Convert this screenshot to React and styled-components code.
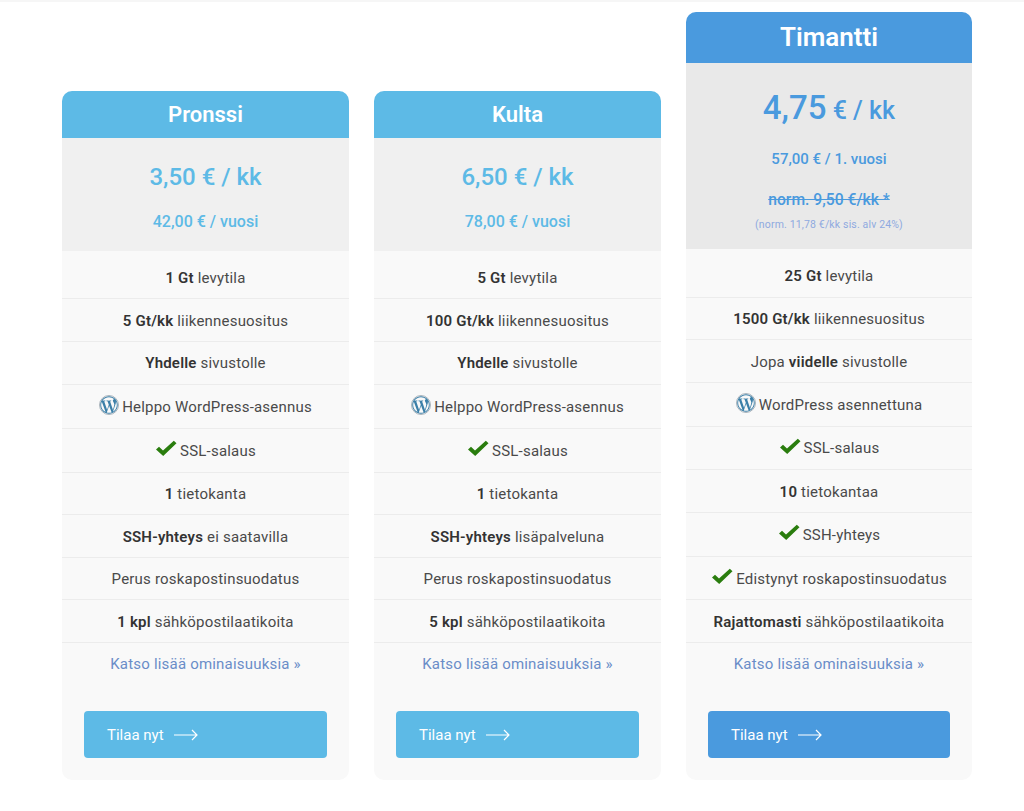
import React from 'react'
import styled, { createGlobalStyle } from 'styled-components'
import { FaWordpressSimple } from 'react-icons/fa'

const plans = [
  {
    name: 'Pronssi',
    color: '#5dbae6',
    price: '3,50 € / kk',
    yearly: '42,00 € / vuosi',
    rows: [
      [<b key="b">1 Gt</b>, ' levytila'],
      [<b key="b">5 Gt/kk</b>, ' liikennesuositus'],
      [<b key="b">Yhdelle</b>, ' sivustolle'],
      { icon: 'wp', text: 'Helppo WordPress-asennus' },
      { icon: 'check', text: 'SSL-salaus' },
      [<b key="b">1</b>, ' tietokanta'],
      [<b key="b">SSH-yhteys</b>, ' ei saatavilla'],
      ['Perus roskapostinsuodatus'],
      [<b key="b">1 kpl</b>, ' sähköpostilaatikoita'],
    ],
  },
  {
    name: 'Kulta',
    color: '#5dbae6',
    price: '6,50 € / kk',
    yearly: '78,00 € / vuosi',
    rows: [
      [<b key="b">5 Gt</b>, ' levytila'],
      [<b key="b">100 Gt/kk</b>, ' liikennesuositus'],
      [<b key="b">Yhdelle</b>, ' sivustolle'],
      { icon: 'wp', text: 'Helppo WordPress-asennus' },
      { icon: 'check', text: 'SSL-salaus' },
      [<b key="b">1</b>, ' tietokanta'],
      [<b key="b">SSH-yhteys</b>, ' lisäpalveluna'],
      ['Perus roskapostinsuodatus'],
      [<b key="b">5 kpl</b>, ' sähköpostilaatikoita'],
    ],
  },
  {
    name: 'Timantti',
    featured: true,
    color: '#4a9ade',
    rows: [
      [<b key="b">25 Gt</b>, ' levytila'],
      [<b key="b">1500 Gt/kk</b>, ' liikennesuositus'],
      ['Jopa ', <b key="b">viidelle</b>, ' sivustolle'],
      { icon: 'wp', text: 'WordPress asennettuna' },
      { icon: 'check', text: 'SSL-salaus' },
      [<b key="b">10</b>, ' tietokantaa'],
      { icon: 'check', text: 'SSH-yhteys' },
      { icon: 'check', text: 'Edistynyt roskapostinsuodatus' },
      [<b key="b">Rajattomasti</b>, ' sähköpostilaatikoita'],
    ],
  },
]

const GlobalStyle = createGlobalStyle`
  html, body { margin: 0; padding: 0; background: #fff; }
  body { font-family: Roboto, "Liberation Sans", sans-serif; color: #444; }
  * { box-sizing: border-box; }
`

const Page = styled.div`
  height: 811px;
  overflow: hidden;
  border-top: 2px solid #f6f6f6;
  padding: 10px 0 0 62px;
`
const Columns = styled.div`
  display: grid;
  grid-template-columns: 287px 287px 286px;
  column-gap: 25px;
  align-items: end;
  height: 768px;
`
const Card = styled.div`
  background: #f9f9f9;
  border-radius: 10px;
`
const Header = styled.h2`
  margin: 0;
  height: ${p => (p.$featured ? 51 : 47)}px;
  line-height: ${p => (p.$featured ? 51 : 47)}px;
  text-align: center;
  color: #fff;
  background: ${p => p.$color};
  border-radius: 10px 10px 0 0;
  font-size: ${p => (p.$featured ? 26 : 22)}px;
  font-weight: 600;
`
const PriceBox = styled.div`
  height: ${p => (p.$featured ? 186 : 113)}px;
  padding-top: ${p => (p.$featured ? 26 : 25)}px;
  background: ${p => (p.$featured ? '#e9e9e9' : '#f0f0f0')};
  color: ${p => p.$color};
  text-align: center;
`
const Price = styled.div`
  font-size: 24px;
  line-height: 28px;
  font-weight: 500;
`
const BigPrice = styled.div`
  line-height: 38px;
  font-size: 25px;
  font-weight: 500;
  span { font-size: 33px; }
`
const Yearly = styled.div`
  margin-top: ${p => (p.$featured ? 19 : 21)}px;
  font-size: ${p => (p.$featured ? 15 : 16)}px;
  line-height: 20px;
  font-weight: 500;
`
const Struck = styled.div`
  margin-top: 21px;
  font-size: 15.7px;
  line-height: 20px;
  font-weight: 500;
  text-decoration: line-through;
`
const Tax = styled.div`
  margin-top: 8px;
  font-size: 10.5px;
  line-height: 14px;
  letter-spacing: 0.15px;
  color: #8fa9e0;
`
const Rows = styled.div`
  padding-top: ${p => (p.$featured ? 6 : 5.8)}px;
`
const rowHeight = p => {
  if (!p.$tall) return 42.6
  return p.$featured ? 43.75 : 44
}
const Row = styled.div`
  height: ${rowHeight}px;
  display: flex;
  align-items: center;
  justify-content: center;
  gap: ${p => (p.$tall ? 3 : 0)}px;
  padding-top: 1px;
  border-bottom: 1px solid #ececec;
  font-size: 15px;
  letter-spacing: 0.2px;
  white-space: pre;
  color: #4a4a4a;
  b { font-weight: 600; color: #333; }
`
const WpBadge = styled.span`
  display: flex;
  align-items: center;
  justify-content: center;
  width: 20px;
  height: 20px;
  margin-top: -3px;
  border: 1px solid #aab4bc;
  border-radius: 50%;
  color: #3b7fa8;
  svg { width: 18px; height: 18px; }
`
const CheckSvg = styled.svg`
  width: 22px;
  height: 17px;
  margin-top: -4px;
`
const MoreLink = styled.a`
  display: block;
  height: 43px;
  line-height: 43px;
  text-align: center;
  font-size: 15px;
  letter-spacing: 0.2px;
  color: #6a8dc8;
`
const BtnWrap = styled.div`
  padding: 25px 22px 22px;
`
const Button = styled.a`
  display: flex;
  align-items: center;
  gap: 10px;
  height: 47px;
  padding-left: 23px;
  background: ${p => p.$color};
  border-radius: 4px;
  color: #fff;
  font-size: 15px;
`

function Check() {
  return (
    <CheckSvg viewBox="0 0 22 17">
      <path d="M1 9.5 L4 6.8 L8 10.6 L18.8 0.8 L21.5 3.2 L8.2 16 Z" fill="#2a7d0e" />
    </CheckSvg>
  )
}

function Arrow() {
  return (
    <svg width="24" height="14" viewBox="0 0 24 14" fill="none" stroke="#fff" strokeWidth="1.2">
      <path d="M0 7 H23 M18 2 L23 7 L18 12" />
    </svg>
  )
}

function Feature({ row, featured }) {
  if (Array.isArray(row)) return <Row>{row}</Row>
  return (
    <Row $tall $featured={featured}>
      {row.icon === 'wp' ? <WpBadge><FaWordpressSimple /></WpBadge> : <Check />}
      <span>{row.text}</span>
    </Row>
  )
}

function Plan({ plan }) {
  const { name, color, featured, price, yearly, rows } = plan
  return (
    <Card>
      <Header $featured={featured} $color={color}>{name}</Header>
      <PriceBox $featured={featured} $color={color}>
        {featured ? (
          <>
            <BigPrice><span>4,75</span> € / kk</BigPrice>
            <Yearly $featured>57,00 € / 1. vuosi</Yearly>
            <Struck>norm. 9,50 €/kk *</Struck>
            <Tax>(norm. 11,78 €/kk sis. alv 24%)</Tax>
          </>
        ) : (
          <>
            <Price>{price}</Price>
            <Yearly>{yearly}</Yearly>
          </>
        )}
      </PriceBox>
      <Rows $featured={featured}>
        {rows.map((row, i) => <Feature key={i} row={row} featured={featured} />)}
      </Rows>
      <MoreLink>Katso lisää ominaisuuksia »</MoreLink>
      <BtnWrap>
        <Button $color={color}>Tilaa nyt <Arrow /></Button>
      </BtnWrap>
    </Card>
  )
}

export default function App() {
  return (
    <Page>
      <GlobalStyle />
      <Columns>
        {plans.map(p => <Plan key={p.name} plan={p} />)}
      </Columns>
    </Page>
  )
}
